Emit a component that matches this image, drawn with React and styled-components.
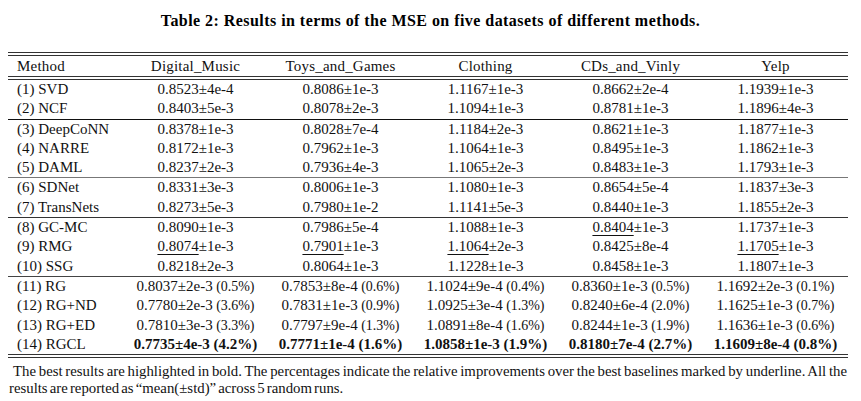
import React from 'react';
import styled, { createGlobalStyle } from 'styled-components';

const GlobalStyle = createGlobalStyle`
    html, body {
        margin: 0;
        padding: 0;
        background: #fff;
    }
    body {
        font-family: "Liberation Serif", "Times New Roman", serif;
        color: #111;
    }
`;

const groups = [
    [
        ['(1) SVD', ['0.8523±4e-4', '0.8086±1e-3', '1.1167±1e-3', '0.8662±2e-4', '1.1939±1e-3']],
        ['(2) NCF', ['0.8403±5e-3', '0.8078±2e-3', '1.1094±1e-3', '0.8781±1e-3', '1.1896±4e-3']],
    ],
    [
        ['(3) DeepCoNN', ['0.8378±1e-3', '0.8028±7e-4', '1.1184±2e-3', '0.8621±1e-3', '1.1877±1e-3']],
        ['(4) NARRE', ['0.8172±1e-3', '0.7962±1e-3', '1.1064±1e-3', '0.8495±1e-3', '1.1862±1e-3']],
        ['(5) DAML', ['0.8237±2e-3', '0.7936±4e-3', '1.1065±2e-3', '0.8483±1e-3', '1.1793±1e-3']],
    ],
    [
        ['(6) SDNet', ['0.8331±3e-3', '0.8006±1e-3', '1.1080±1e-3', '0.8654±5e-4', '1.1837±3e-3']],
        ['(7) TransNets', ['0.8273±5e-3', '0.7980±1e-2', '1.1141±5e-3', '0.8440±1e-3', '1.1855±2e-3']],
    ],
    [
        ['(8) GC-MC', ['0.8090±1e-3', '0.7986±5e-4', '1.1088±1e-3', '_0.8404±1e-3', '1.1737±1e-3']],
        ['(9) RMG', ['_0.8074±1e-3', '_0.7901±1e-3', '_1.1064±2e-3', '0.8425±8e-4', '_1.1705±1e-3']],
        ['(10) SSG', ['0.8218±2e-3', '0.8064±1e-3', '1.1228±1e-3', '0.8458±1e-3', '1.1807±1e-3']],
    ],
    [
        ['(11) RG', ['0.8037±2e-3 (0.5%)', '0.7853±8e-4 (0.6%)', '1.1024±9e-4 (0.4%)', '0.8360±1e-3 (0.5%)', '1.1692±2e-3 (0.1%)']],
        ['(12) RG+ND', ['0.7780±2e-3 (3.6%)', '0.7831±1e-3 (0.9%)', '1.0925±3e-4 (1.3%)', '0.8240±6e-4 (2.0%)', '1.1625±1e-3 (0.7%)']],
        ['(13) RG+ED', ['0.7810±3e-3 (3.3%)', '0.7797±9e-4 (1.3%)', '1.0891±8e-4 (1.6%)', '0.8244±1e-3 (1.9%)', '1.1636±1e-3 (0.6%)']],
        ['(14) RGCL', ['*0.7735±4e-3 (4.2%)', '*0.7771±1e-4 (1.6%)', '*1.0858±1e-3 (1.9%)', '*0.8180±7e-4 (2.7%)', '*1.1609±8e-4 (0.8%)']],
    ],
];

const datasets = ['Digital_Music', 'Toys_and_Games', 'Clothing', 'CDs_and_Vinly', 'Yelp'];

// rules between groups: the lighter ones look grey in the print
const groupRule = ['#111', '#777', '#333', '#444'];

function Value({ raw }) {
    const bold = raw.startsWith('*');
    const under = raw.startsWith('_');
    const text = raw.replace(/^[*_]/, '');
    const [num, pct] = text.split(' ');
    const [mean, std] = num.split('±');
    return (
        <Cell $bold={bold}>
            {under ? <Under>{mean}</Under> : mean}±{std}
            {pct && <Pct $bold={bold}> {pct}</Pct>}
        </Cell>
    );
}

export default function App() {
    return (
        <Page>
            <GlobalStyle />
            <Caption>Table 2: Results in terms of the MSE on five datasets of different methods.</Caption>
            <Table>
                <colgroup>
                    <col style={{ width: 115 }} />
                    {datasets.map((d) => (
                        <col key={d} style={{ width: 145 }} />
                    ))}
                </colgroup>
                <thead>
                    <tr>
                        <HeadCell $left>Method</HeadCell>
                        {datasets.map((d) => (
                            <HeadCell key={d}>{d}</HeadCell>
                        ))}
                    </tr>
                </thead>
                {groups.map((rows, g) => (
                    <Group key={g} $rule={g > 0 ? groupRule[g - 1] : null}>
                        {rows.map(([name, values]) => (
                            <Row key={name}>
                                <NameCell>{name}</NameCell>
                                {values.map((v, i) => (
                                    <Value key={i} raw={v} />
                                ))}
                            </Row>
                        ))}
                    </Group>
                ))}
            </Table>
            <Note>
                The best results are highlighted in bold. The percentages indicate the relative improvements over the
                best baselines marked by underline. All the results are reported as “mean(±std)” across 5 random runs.
            </Note>
        </Page>
    );
}

const Page = styled.div`
    width: 861px;
    height: 401px;
    padding: 0 8px;
    box-sizing: border-box;
    overflow: hidden;
`;

const Caption = styled.div`
    padding-top: 12px;
    font-weight: bold;
    font-size: 16px;
    letter-spacing: 0.45px;
    line-height: 18px;
    text-align: center;
    color: #000;
`;

const Table = styled.table`
    width: 840px;
    margin-top: 22px;
    table-layout: fixed;
    border-collapse: collapse;
    border-top: 4px double #333;
    border-bottom: 4px double #333;
    font-size: 15px;
`;

const HeadCell = styled.th`
    font-weight: normal;
    height: 20px;
    line-height: 20px;
    padding: 0 0 0 ${(p) => (p.$left ? '9px' : '0')};
    text-align: ${(p) => (p.$left ? 'left' : 'center')};
    border-bottom: 4px double #333;
    white-space: nowrap;
    letter-spacing: 0.2px;
`;

const Group = styled.tbody`
    border-top: ${(p) => (p.$rule ? `1px solid ${p.$rule}` : 'none')};
`;

const Row = styled.tr`
    height: 19.3px;
`;

const NameCell = styled.td`
    padding: 0 0 0 9px;
    line-height: 19.3px;
    white-space: nowrap;
`;

const Cell = styled.td`
    padding: 0;
    line-height: 19.3px;
    text-align: center;
    white-space: nowrap;
    font-weight: ${(p) => (p.$bold ? 'bold' : 'normal')};
    color: #111;
`;

const Under = styled.span`
    text-decoration: underline;
    text-decoration-thickness: 1px;
    text-underline-offset: 3px;
`;

const Pct = styled.span`
    font-size: ${(p) => (p.$bold ? '1em' : '0.93em')};
`;

const Note = styled.p`
    margin: 5px 0 0;
    padding: 0 6px 0 1px;
    text-indent: 4px;
    font-size: 14.8px;
    word-spacing: -1.6px;
    line-height: 17px;
    text-align: justify;
    color: #111;
`;
